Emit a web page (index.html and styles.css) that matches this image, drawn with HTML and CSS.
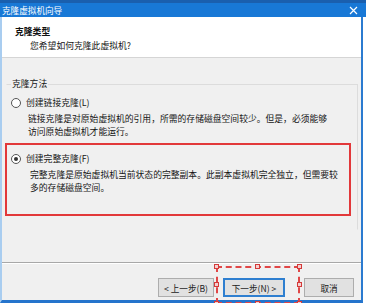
FILE: index.html
```html
<!DOCTYPE html>
<html>
<head>
<meta charset="utf-8">
<link rel="stylesheet" href="styles.css">
</head>
<body>
<div class="titlebar">
  <span class="title">克隆虚拟机向导</span>
  <svg class="close" width="9" height="9" viewBox="0 0 9 9"><path d="M1 1L8 8M8 1L1 8" stroke="#fff" stroke-width="1.2"/></svg>
</div>
<div class="frame">
  <div class="header">
    <div class="h-title">克隆类型</div>
    <div class="h-sub">您希望如何克隆此虚拟机?</div>
  </div>
  <div class="content">
    <fieldset class="group">
      <legend>克隆方法</legend>
      <div class="option">
        <div class="radio-row"><span class="radio"></span><span>创建链接克隆(L)</span></div>
        <div class="desc">链接克隆是对原始虚拟机的引用，所需的存储磁盘空间较少。但是，必须能够<br>访问原始虚拟机才能运行。</div>
      </div>
      <div class="option highlight">
        <div class="radio-row"><span class="radio checked"></span><span>创建完整克隆(F)</span></div>
        <div class="desc">完整克隆是原始虚拟机当前状态的完整副本。此副本虚拟机完全独立，但需要较<br>多的存储磁盘空间。</div>
      </div>
    </fieldset>
  </div>
  <div class="footer">
    <div class="buttons">
      <button class="btn back">&lt; 上一步(B)</button>
      <button class="btn next">下一步(N) &gt;</button>
      <button class="btn cancel">取消</button>
    </div>
    <div class="select-box">
      <span class="hd tl"></span><span class="hd tm"></span><span class="hd tr"></span>
      <span class="hd ml"></span><span class="hd mr"></span>
      <span class="hd bl"></span><span class="hd bm"></span><span class="hd br"></span>
    </div>
  </div>
</div>
</body>
</html>
```
FILE: styles.css
```css
html, body {
  margin: 0;
  padding: 0;
}
body {
  width: 366px;
  height: 303px;
  overflow: hidden;
  background: #ffffff;
  font-family: "Noto Sans CJK SC", "Noto Sans", sans-serif;
  font-size: 8.8px;
  color: #151515;
}
.titlebar {
  height: 14px;
  border-top: 3px solid #1a5fae;
  background: #1878d6;
  display: flex;
  align-items: center;
  justify-content: space-between;
  padding: 0 8px 0 2px;
  width: 356px;
}
.title {
  color: #ffffff;
  font-size: 8.6px;
  line-height: 14px;
}
.close {
  display: block;
}
.frame {
  width: 359px;
  height: 283px;
  border-left: 2px solid #a9cdf0;
  border-right: 2px solid #2b7bd0;
  border-bottom: 3px solid #2574cc;
  background: #f0f0f0;
  display: flex;
  flex-direction: column;
}
.header {
  background: #ffffff;
  border-bottom: 1px solid #d5d5d5;
  padding-top: 8px;
  height: 32px;
}
.h-title {
  padding-left: 13px;
  line-height: 13px;
  font-weight: 700;
  color: #111;
}
.h-sub {
  padding-left: 28px;
  line-height: 13px;
  margin-top: 1px;
}
.content {
  flex: 1;
  padding-top: 20px;
  border-bottom: 1px solid #a8a8a8;
}
.group {
  margin: 0 3px 0 4px;
  padding: 0 4px 0 4px;
  border: 1px solid #dcdcdc;
  border-left-color: transparent;
  border-bottom-color: transparent;
  height: 150px;
}
.group legend {
  padding: 0 1px;
  line-height: 12px;
}
.option {
  margin-top: 7px;
}
.radio-row {
  display: flex;
  align-items: center;
  gap: 5px;
  line-height: 12px;
}
.radio {
  width: 8px;
  height: 8px;
  border: 1px solid #555;
  border-radius: 50%;
  background: #fff;
  box-sizing: content-box;
  position: relative;
  flex: none;
}
.radio.checked::after {
  content: "";
  position: absolute;
  left: 2px;
  top: 2px;
  width: 4px;
  height: 4px;
  border-radius: 50%;
  background: #333;
}
.desc {
  padding-left: 17px;
  line-height: 13px;
  margin-top: 3px;
}
.highlight {
  margin: 5px 2px 0 -6px;
  border: 2px solid #e2383a;
  padding: 8px 0 20px 4px;
}
.highlight .desc {
  padding-left: 19px;
}
.footer {
  height: 36px;
  border-top: 1px solid #ffffff;
  position: relative;
}
.buttons {
  display: flex;
  justify-content: flex-end;
  padding: 14px 7px 0 0;
}
.btn {
  font-family: inherit;
  font-size: 8.6px;
  color: #1a1a1a;
  height: 19px;
  background: #e1e1e1;
  border: 1px solid #adadad;
  padding: 0;
  margin: 0;
}
.back { width: 56px; }
.next {
  width: 62px;
  margin-left: 9px;
  border: 2px solid #2f7fd0;
}
.cancel {
  width: 50px;
  margin-left: 19px;
}
.select-box {
  position: absolute;
  left: 214px;
  top: 2px;
  width: 80px;
  height: 34px;
  border: 2px dashed #e04646;
}
.hd {
  position: absolute;
  width: 3px;
  height: 3px;
  border: 1px solid #d43a3a;
  background: #f4d0d0;
}
.tl { left: -4px; top: -4px; }
.tm { left: 37px; top: -4px; }
.tr { right: -4px; top: -4px; }
.ml { left: -4px; top: 14px; }
.mr { right: -4px; top: 14px; }
.bl { left: -4px; bottom: -4px; }
.bm { left: 37px; bottom: -4px; }
.br { right: -4px; bottom: -4px; }
```
